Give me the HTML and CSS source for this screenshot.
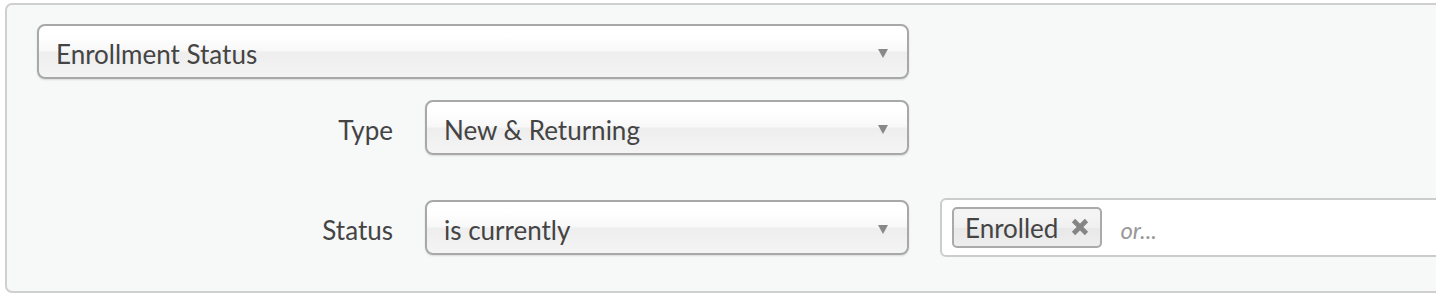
FILE: index.html
```html
<!DOCTYPE html>
<html>
<head>
<meta charset="utf-8">
<link rel="stylesheet" href="styles.css">
</head>
<body>
<div class="panel">
  <div class="row row-main">
    <div class="select select-wide">
      <span class="select-text">Enrollment Status</span>
      <span class="arrow"></span>
    </div>
  </div>
  <div class="row row-type">
    <div class="label">Type</div>
    <div class="select select-narrow">
      <span class="select-text">New &amp; Returning</span>
      <span class="arrow"></span>
    </div>
  </div>
  <div class="row row-status">
    <div class="label">Status</div>
    <div class="select select-narrow">
      <span class="select-text">is currently</span>
      <span class="arrow"></span>
    </div>
    <div class="tags">
      <span class="tag">Enrolled
        <svg class="tag-x" width="18" height="18" viewBox="0 0 18 18"><path d="M2.5 2.5 L15.5 15.5 M15.5 2.5 L2.5 15.5" stroke="#858585" stroke-width="4.6" stroke-linecap="butt"/></svg>
      </span>
      <span class="placeholder">or...</span>
    </div>
  </div>
</div>
</body>
</html>
```
FILE: styles.css
```css
html, body {
  margin: 0;
  padding: 0;
  background: #ffffff;
  overflow: hidden;
}
body {
  font-family: Lato, "Open Sans", sans-serif;
  color: #444;
  width: 1436px;
  height: 294px;
}
.panel {
  margin: 3px 0 0 5px;
  width: 1500px;
  height: 290px;
  box-sizing: border-box;
  border: 2px solid #cfcfcf;
  border-radius: 7px;
  background: #f7f8f8;
  padding: 19px 0 0 30px;
}
.row {
  display: flex;
  align-items: center;
}
.row-type {
  margin-top: 21px;
}
.row-status {
  margin-top: 43px;
}
.label {
  width: 356px;
  text-align: right;
  margin-right: 32px;
  font-size: 26px;
  padding-top: 5px;
}
.select {
  position: relative;
  box-sizing: border-box;
  height: 55px;
  border: 2px solid #a8a8a8;
  border-radius: 8px;
  background: linear-gradient(#ffffff 20%, #f8f8f8 48%, #eeeeee 52%, #f4f4f4 100%);
  box-shadow: 0 1px 2px rgba(0,0,0,0.12);
  display: flex;
  align-items: center;
  padding: 5px 0 0 17px;
  font-size: 26px;
  color: #444;
}
.select-wide {
  width: 872px;
}
.select-narrow {
  width: 484px;
}
.arrow {
  position: absolute;
  right: 19px;
  top: 23px;
  width: 0;
  height: 0;
  border-left: 5.5px solid transparent;
  border-right: 5.5px solid transparent;
  border-top: 9px solid #888;
}
.tags {
  margin-left: 31px;
  box-sizing: border-box;
  width: 560px;
  height: 59px;
  border: 2px solid #ccc;
  border-radius: 6px;
  background: #fff;
  display: flex;
  align-items: center;
  padding-left: 10px;
}
.tag {
  box-sizing: border-box;
  height: 41px;
  border: 2px solid #aaa;
  border-radius: 5px;
  background: linear-gradient(#f4f4f4 20%, #f0f0f0 50%, #e8e8e8 52%, #eeeeee 100%);
  display: flex;
  align-items: center;
  padding: 1px 11px 0 11px;
  font-size: 26px;
  color: #444;
}
.tag-x {
  margin-left: 13px;
  margin-top: -2px;
}
.placeholder {
  margin-left: 18px;
  font-style: italic;
  color: #999;
  font-size: 24px;
  padding-top: 3px;
}
```
